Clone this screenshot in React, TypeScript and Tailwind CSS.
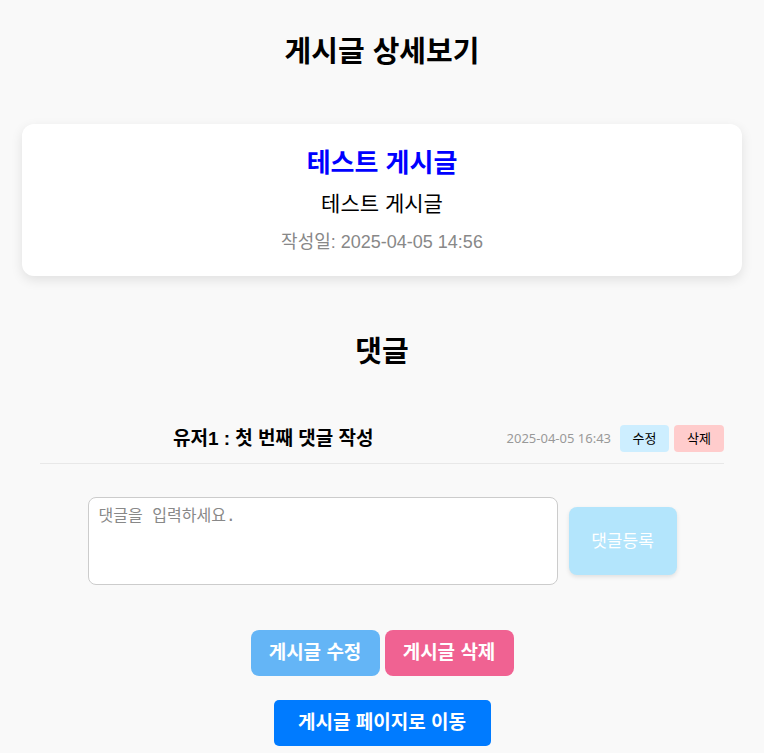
const font = "font-['Liberation_Sans','Noto_Sans_CJK_KR',sans-serif]";

function CommentRow() {
  return (
    <div className="mx-10 flex items-center border-b border-[#e8e8e8] pb-[11px]">
      <div className="flex-1 text-center text-[19px] font-bold leading-[26px] text-black">
        유저1 : 첫 번째 댓글 작성
      </div>
      <span className="mr-[9px] font-['Noto_Sans','Noto_Sans_CJK_KR',sans-serif] text-[13px] text-[#999]">
        2025-04-05 16:43
      </span>
      <button className="mr-[5px] h-[27px] w-[49px] rounded-[4px] bg-[#cdeeff] font-['Noto_Sans','Noto_Sans_CJK_KR',sans-serif] text-[13px] text-black">
        수정
      </button>
      <button className="h-[27px] w-[50px] rounded-[4px] bg-[#ffcccc] font-['Noto_Sans','Noto_Sans_CJK_KR',sans-serif] text-[13px] text-black">
        삭제
      </button>
    </div>
  );
}

export default function App() {
  return (
    <div className={`min-h-screen bg-[#f9f9f9] pt-[34px] pb-[6px] ${font}`}>
      <h1 className="text-center text-[29px] font-bold leading-[36px] text-black">게시글 상세보기</h1>

      <div className="mx-[22px] mt-[54px] rounded-[12px] bg-white px-6 pt-6 pb-[22px] text-center shadow-[0_4px_12px_rgba(0,0,0,0.1)]">
        <h2 className="text-[26px] font-bold leading-[30px] text-[#0000ff]">테스트 게시글</h2>
        <p className="mt-3 text-[21px] leading-[28px] text-black">테스트 게시글</p>
        <p className="mt-3 text-[18px] leading-[24px] text-[#888]">작성일: 2025-04-05 14:56</p>
      </div>

      <h2 className="mt-[58px] text-center text-[29px] font-bold leading-[36px] text-black">댓글</h2>

      <div className="mt-[55px]">
        <CommentRow />
      </div>

      <div className="mt-[33px] flex items-start justify-center gap-[11px]">
        <textarea
          placeholder="댓글을 입력하세요."
          className="h-[88px] w-[470px] resize-none rounded-[8px] border border-[#ccc] bg-white px-[10px] py-[6px] font-['DejaVu_Sans_Mono','Noto_Sans_CJK_KR',monospace] text-[16px] placeholder:text-[#888]"
        />
        <button className="mt-[10px] h-[68px] w-[108px] rounded-[8px] bg-[#b3e5fc] font-['Noto_Sans','Noto_Sans_CJK_KR',sans-serif] text-[17px] text-white shadow-[0_2px_4px_rgba(0,0,0,0.1)]">
          댓글등록
        </button>
      </div>

      <div className="mt-[45px] flex justify-center gap-[5px]">
        <button className="h-[46px] w-[129px] rounded-[8px] bg-[#64b5f6] text-[19px] font-bold text-white">
          게시글 수정
        </button>
        <button className="h-[46px] w-[129px] rounded-[8px] bg-[#f06292] text-[19px] font-bold text-white">
          게시글 삭제
        </button>
      </div>

      <div className="mt-[24px] flex justify-center">
        <button className="h-[46px] w-[217px] rounded-[5px] bg-[#007bff] text-[19px] font-bold text-white">
          게시글 페이지로 이동
        </button>
      </div>
    </div>
  );
}
